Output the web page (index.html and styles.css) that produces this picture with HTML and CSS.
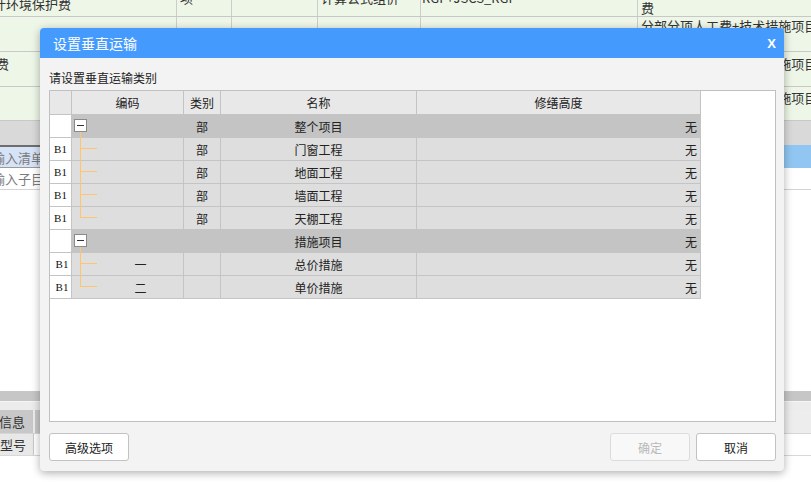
FILE: index.html
```html
<!DOCTYPE html>
<html lang="zh-CN">
<head>
<meta charset="utf-8">
<title>设置垂直运输</title>
<link rel="stylesheet" href="styles.css">
</head>
<body>
<div class="app">
  <div class="sheet">
    <div class="srow r1">
      <div class="c c1 pb5"><span class="ind7">计环境保护费</span></div>
      <div class="c c2 pb11">项</div>
      <div class="c c3"></div>
      <div class="c c4 pb11">计算公式组价</div>
      <div class="c c5 pb11">RGF+JSCS_RGF</div>
      <div class="c c6 pb1">费</div>
    </div>
    <div class="srow r2">
      <div class="c c1"></div>
      <div class="c c2"></div>
      <div class="c c3"></div>
      <div class="c c4"></div>
      <div class="c c5"></div>
      <div class="c c6 pt1">分部分项人工费+技术措施项目</div>
    </div>
    <div class="srow r3">
      <div class="c c1 pt4"><span class="ind4">费</span></div>
      <div class="c c2"></div>
      <div class="c c3"></div>
      <div class="c c4"></div>
      <div class="c c5"></div>
      <div class="c c6 pt4">分部分项人工费+技术措施项目</div>
    </div>
    <div class="srow r4">
      <div class="c c1"></div>
      <div class="c c2"></div>
      <div class="c c3"></div>
      <div class="c c4"></div>
      <div class="c c5"></div>
      <div class="c c6 pt3">分部分项人工费+技术措施项目</div>
    </div>
    <div class="band"></div>
    <div class="lrow sel"><div class="lcell edit"><span class="ind8">输入清单</span></div></div>
    <div class="lrow sub"><div class="lcell"><span class="ind8">输入子目</span></div></div>
    <div class="fill"></div>
    <div class="band2"></div>
    <div class="band3"></div>
    <div class="tabs"><div class="tab first"><span class="ind3">基本信息</span></div><div class="tab"></div></div>
    <div class="prow"><div class="pc"><span>型号</span></div></div>
    <div class="rest"></div>
  </div>

  <div class="dialog">
    <div class="dlg-title"><span class="ttl">设置垂直运输</span><span class="close">X</span></div>
    <div class="dlg-body">
      <div class="hint">请设置垂直运输类别</div>
      <div class="grid-box">
        <div class="grid">
          <div class="gr head">
            <div class="gc rh"></div><div class="gc code">编码</div><div class="gc type">类别</div><div class="gc name">名称</div><div class="gc hgt center">修缮高度</div>
          </div>
          <div class="gr grp">
            <div class="gc rh"></div><div class="gc code"><span class="tog"></span><span class="vl from-box"></span></div><div class="gc type">部</div><div class="gc name">整个项目</div><div class="gc hgt">无</div>
          </div>
          <div class="gr">
            <div class="gc rh">B1</div><div class="gc code"><span class="vl full"></span><span class="br"></span></div><div class="gc type">部</div><div class="gc name">门窗工程</div><div class="gc hgt">无</div>
          </div>
          <div class="gr">
            <div class="gc rh">B1</div><div class="gc code"><span class="vl full"></span><span class="br"></span></div><div class="gc type">部</div><div class="gc name">地面工程</div><div class="gc hgt">无</div>
          </div>
          <div class="gr">
            <div class="gc rh">B1</div><div class="gc code"><span class="vl full"></span><span class="br"></span></div><div class="gc type">部</div><div class="gc name">墙面工程</div><div class="gc hgt">无</div>
          </div>
          <div class="gr">
            <div class="gc rh">B1</div><div class="gc code"><span class="vl last"></span><span class="br"></span></div><div class="gc type">部</div><div class="gc name">天棚工程</div><div class="gc hgt">无</div>
          </div>
          <div class="gr grp">
            <div class="gc rh"></div><div class="gc code"><span class="tog"></span><span class="vl from-box"></span></div><div class="gc type"></div><div class="gc name">措施项目</div><div class="gc hgt">无</div>
          </div>
          <div class="gr">
            <div class="gc rh shift">B1</div><div class="gc code ind"><span class="vl full"></span><span class="br"></span>一</div><div class="gc type"></div><div class="gc name">总价措施</div><div class="gc hgt">无</div>
          </div>
          <div class="gr">
            <div class="gc rh shift">B1</div><div class="gc code ind"><span class="vl last"></span><span class="br"></span>二</div><div class="gc type"></div><div class="gc name">单价措施</div><div class="gc hgt">无</div>
          </div>
        </div>
      </div>
      <div class="dlg-foot">
        <button class="btn">高级选项</button>
        <span class="spacer"></span>
        <button class="btn disabled">确定</button>
        <button class="btn">取消</button>
      </div>
    </div>
  </div>
</div>
</body>
</html>
```

FILE: styles.css
```css
* { box-sizing: border-box; margin: 0; padding: 0; }
html, body { width: 811px; height: 482px; overflow: hidden; background: #fff; }
body {
  font-family: "Noto Sans CJK SC", "Noto Sans", sans-serif;
  font-size: 12px;
  color: #222;
}
.app { position: relative; width: 811px; height: 482px; overflow: hidden; }

/* background sheet */
.sheet { display: flex; flex-direction: column; width: 811px; height: 482px; font-size: 13px; line-height: 15px; color: #333; }
.srow { display: flex; flex: none; background: #edf6e7; border-bottom: 1px solid #c8c8c8; }
.r1 { height: 17px; }
.r2, .r3 { height: 35px; }
.r4 { height: 34px; }
.r1 .c { display: flex; align-items: flex-end; }
.c { flex: none; border-right: 1px solid #cccccc; overflow: hidden; white-space: nowrap; padding-left: 3px; }
.c1 { width: 177px; padding-left: 0; }
.c2 { width: 55px; }
.c3 { width: 86px; }
.c4 { width: 103px; }
.c5 { width: 217px; padding-left: 1px; }
.c6 { width: 200px; border-right: 0; }
.pb1 { padding-bottom: 1px; }
.pb5 { padding-bottom: 5px; }
.pb11 { padding-bottom: 11px; }
.pt1 { padding-top: 1px; }
.pt3 { padding-top: 3px; }
.pt4 { padding-top: 4px; }
.ind7 { display: inline-block; margin-left: -7px; }
.ind4 { display: inline-block; margin-left: -4px; }
.ind8 { display: inline-block; margin-left: -8px; }
.ind3 { display: inline-block; margin-left: -27px; }

.band { flex: none; height: 24px; background: #d9d9d9; }
.lrow { flex: none; display: flex; }
.lrow.sel { height: 23px; background: #90c6f1; }
.lcell { width: 150px; display: flex; align-items: center; color: #7a7a7a; overflow: hidden; white-space: nowrap; }
.lcell.edit { background: #d6e3f7; border-top: 2px solid #6e6e6e; border-bottom: 1px solid #9a9a9a; }
.lrow.sub { height: 22px; border-bottom: 1px solid #d4d4d4; }
.fill { flex: none; height: 201px; }
.band2 { flex: none; height: 10px; background: #c6c6c6; }
.band3 { flex: none; height: 9px; background: #ececec; border-top: 1px solid #f6f6f6; }
.tabs { flex: none; display: flex; height: 24px; background: #ededed; border-bottom: 1px solid #d6d6d6; }
.tab { width: 160px; background: #c8c8c8; display: flex; align-items: center; overflow: hidden; white-space: nowrap; color: #333; }
.tab.first { width: 33px; margin-right: 2px; }
.prow { flex: none; display: flex; height: 22px; background: #fff; border-bottom: 1px solid #d8d8d8; }
.pc { width: 34px; background: #e8e8e8; border-right: 1px solid #c8c8c8; display: flex; align-items: center; overflow: hidden; white-space: nowrap; color: #333; }
.rest { flex: 1; }

/* dialog */
.dialog {
  position: absolute; left: 40px; top: 28px; width: 744px; height: 443px;
  background: #f3f3f3; border-radius: 4px;
  box-shadow: 0 2px 9px rgba(0, 0, 0, 0.32);
  display: flex; flex-direction: column; overflow: hidden;
}
.dlg-title {
  flex: none; height: 30px; background: #459bfd; color: #fff;
  display: flex; align-items: center; justify-content: space-between;
  padding: 0 8px 0 13px;
}
.ttl { font-size: 14px; line-height: 18px; }
.close { font-family: "Liberation Sans", Arial, sans-serif; font-weight: bold; font-size: 13px; line-height: 13px; padding-top: 1px; }
.dlg-body { flex: 1; display: flex; flex-direction: column; padding: 0 8px 10px 9px; }
.hint { flex: none; padding-top: 11px; height: 32px; line-height: 17px; font-size: 12px; color: #222; }
.grid-box { flex: none; height: 332px; background: #fff; border: 1px solid #c0c0c0; }
.grid { width: 651px; }
.gr { display: flex; height: 23px; }
.gr.head { height: 24px; }
.gc {
  flex: none; position: relative;
  border-right: 1px solid #c4c4c4; border-bottom: 1px solid #c4c4c4;
  display: flex; align-items: center; justify-content: center;
  background: #dedede; white-space: nowrap;
}
.head .gc { background: #e8e8e8; }
.grp .gc { background: #c4c4c4; }
.gr .rh { background: #fff; font-family: "Liberation Serif", "DejaVu Serif", serif; font-size: 11px; color: #111; }
.head .rh { background: #e8e8e8; }
.rh.shift { padding-left: 3px; }
.rh { width: 22px; }
.code { width: 112px; }
.code.ind { padding-left: 26px; }
.type { width: 37px; }
.name { width: 196px; }
.hgt { width: 284px; justify-content: flex-end; padding-right: 3px; }
.hgt.center { justify-content: center; padding-right: 0; }

.tog {
  position: absolute; left: 2px; top: 4px; width: 13px; height: 13px;
  border: 1px solid #8a8a8a; background: #fff;
}
.tog::after {
  content: ""; position: absolute; left: 2px; top: 5px; width: 7px; height: 1px; background: #333;
}
.vl { position: absolute; left: 8px; width: 1px; background: #ffc46e; }
.vl.from-box { top: 17px; bottom: -1px; }
.vl.full { top: 0; bottom: -1px; }
.vl.last { top: 0; height: 11px; }
.br { position: absolute; left: 8px; top: 10px; width: 17px; height: 1px; background: #ffc46e; }

.dlg-foot { flex: none; display: flex; align-items: center; margin-top: 11px; gap: 6px; }
.spacer { flex: 1; }
.btn {
  width: 80px; height: 28px; background: #fff; border: 1px solid #c2c2c2; border-radius: 3px;
  font-family: "Noto Sans CJK SC", "Noto Sans", sans-serif; font-size: 12px; color: #222;
}
.btn.disabled { background: #f8f8f8; border-color: #dcdcdc; color: #b9b9b9; }
```
